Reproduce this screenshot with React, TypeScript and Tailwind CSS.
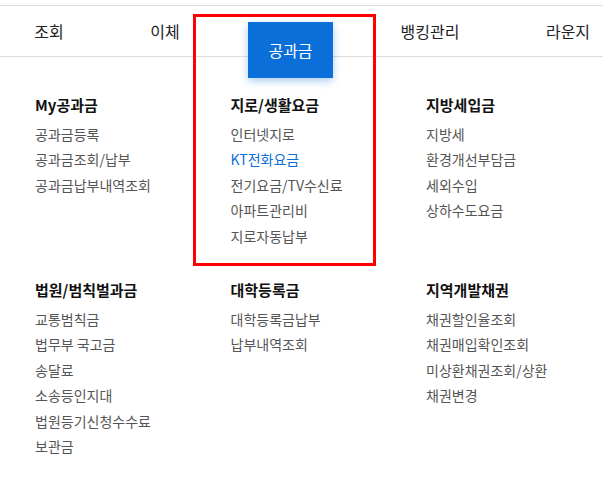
import React from 'react'

const font = { fontFamily: '"Noto Sans CJK KR", "Noto Sans", sans-serif' }

interface Group {
  title: string
  items: string[]
}

const topRow: Group[] = [
  { title: 'My공과금', items: ['공과금등록', '공과금조회/납부', '공과금납부내역조회'] },
  { title: '지로/생활요금', items: ['인터넷지로', 'KT전화요금', '전기요금/TV수신료', '아파트관리비', '지로자동납부'] },
  { title: '지방세입금', items: ['지방세', '환경개선부담금', '세외수입', '상하수도요금'] },
]

const bottomRow: Group[] = [
  { title: '법원/범칙벌과금', items: ['교통범칙금', '법무부 국고금', '송달료', '소송등인지대', '법원등기신청수수료', '보관금'] },
  { title: '대학등록금', items: ['대학등록금납부', '납부내역조회'] },
  { title: '지역개발채권', items: ['채권할인율조회', '채권매입확인조회', '미상환채권조회/상환', '채권변경'] },
]

function MenuGroup({ group }: { group: Group }) {
  return (
    <div className="w-[195.5px] shrink-0">
      <h3 className="text-[15px] font-bold leading-[20px] text-[#111] mb-[7px]">{group.title}</h3>
      <ul>
        {group.items.map((item) => (
          <li
            key={item}
            className={`text-[14px] leading-[25.4px] ${item === 'KT전화요금' ? 'text-[#0a6fd9]' : 'text-[#555]'}`}
          >
            {item}
          </li>
        ))}
      </ul>
    </div>
  )
}

export default function App() {
  return (
    <div className="relative w-[603px] h-[480px] bg-white overflow-hidden" style={font}>
      {/* Top nav */}
      <div className="pt-[5px]">
        <nav className="flex h-[52px] border-t border-b border-[#dddddd] text-[16px] text-[#222]">
          <div className="w-[98px] flex items-center justify-center shrink-0">조회</div>
          <div className="w-[134px] flex items-center justify-center shrink-0">이체</div>
          <div className="w-[117px] flex justify-center shrink-0">
            <div className="relative z-10 mt-[16px] w-[85px] h-[56px] flex items-center justify-center bg-[#0a6fd9] text-white shadow-[0_3px_8px_rgba(10,111,217,0.35)]">
              공과금
            </div>
          </div>
          <div className="w-[162px] flex items-center justify-center shrink-0">뱅킹관리</div>
          <div className="w-[114px] flex items-center justify-center shrink-0">라운지</div>
        </nav>
      </div>

      {/* Mega menu */}
      <div className="pl-[35px] pt-[38px]">
        <div className="flex">
          {topRow.map((g) => (
            <MenuGroup key={g.title} group={g} />
          ))}
        </div>
        <div className="flex mt-[31px]">
          {bottomRow.map((g) => (
            <MenuGroup key={g.title} group={g} />
          ))}
        </div>
      </div>

      {/* highlight box */}
      <div className="absolute left-[193px] top-[14px] w-[183px] h-[252px] border-[3px] border-[#ff0000] pointer-events-none z-20" />
    </div>
  )
}
